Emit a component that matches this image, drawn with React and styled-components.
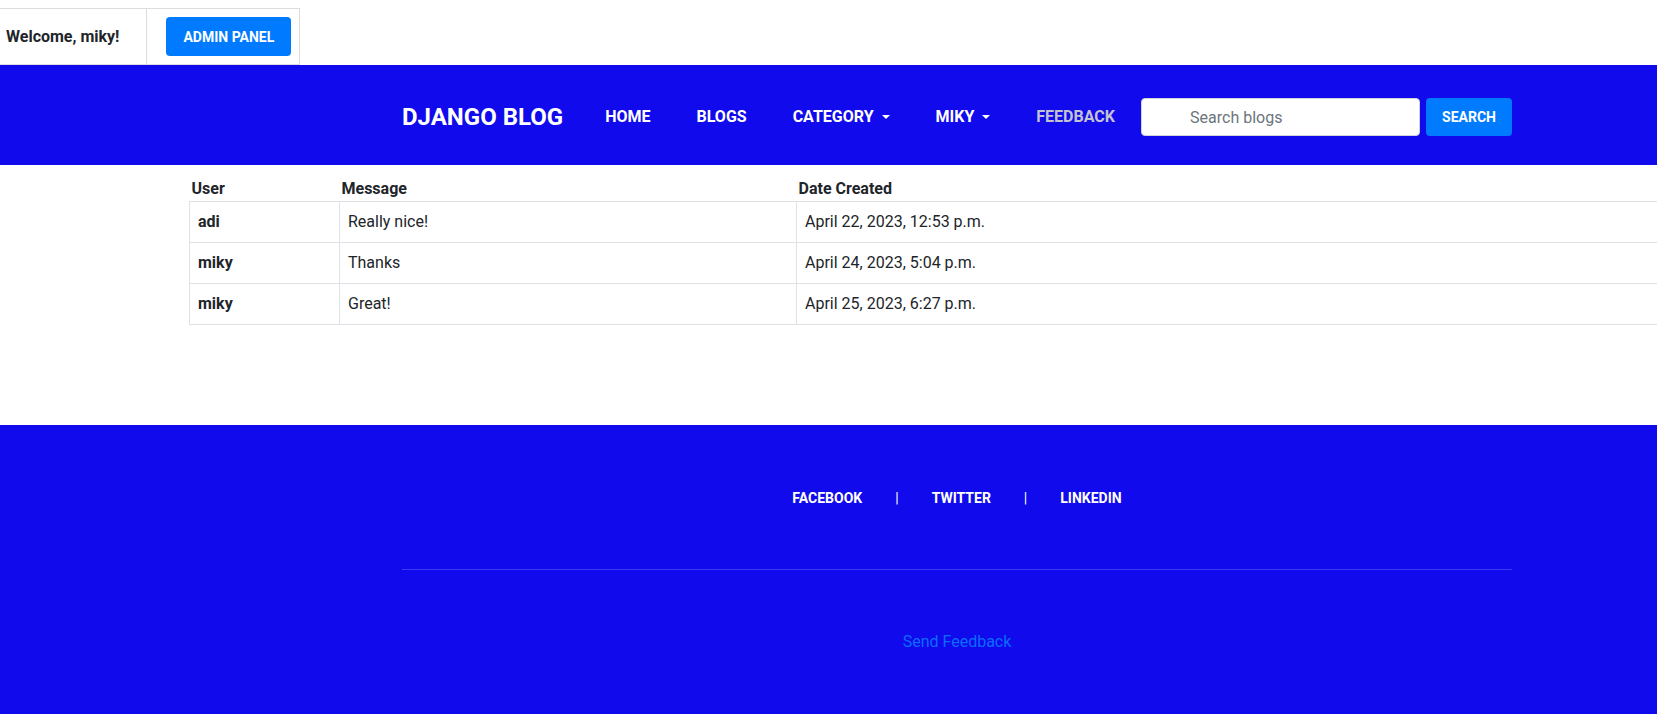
import React from 'react';
import styled, { createGlobalStyle } from 'styled-components';

const GlobalStyle = createGlobalStyle`
  html, body {
    overflow-x: hidden;
  }
  body {
    margin: 8px 0;
    background: #fff;
    font-family: Roboto, "Liberation Sans", Arial, sans-serif;
    font-size: 16px;
    line-height: 24px;
    color: #212529;
  }
  * {
    box-sizing: border-box;
  }
`;

const BLUE = '#100aec';

const Page = styled.div`
  width: 1914px;
`;

const TopTable = styled.table`
  border-collapse: collapse;
  border-top: 1px solid #dddddd;
  border-bottom: 1px solid #dddddd;
  border-right: 1px solid #dddddd;
`;

const TopCell = styled.td`
  padding: ${(p) => (p.$first ? '8px 27px 8px 6px' : '8px 8px 8px 19px')};
  border-right: ${(p) => (p.$first ? '1px solid #dddddd' : 'none')};
  font-weight: 700;
  vertical-align: middle;
`;

const PrimaryButton = styled.button`
  height: ${(p) => (p.$tall ? '39px' : '38px')};
  padding: 0 ${(p) => (p.$tall ? '17px' : '16px')};
  border: none;
  border-radius: 4px;
  background: #007bff;
  color: #fff;
  font-family: inherit;
  font-size: 14px;
  font-weight: 700;
  text-transform: uppercase;
  cursor: pointer;
  display: block;
`;

const Navbar = styled.nav`
  background: ${BLUE};
  height: 100px;
  padding-top: 4px;
  display: flex;
  align-items: center;
`;

const Container = styled.div`
  width: 1110px;
  margin: 0 auto;
  display: flex;
  align-items: center;
`;

const Brand = styled.a`
  color: #fff;
  font-size: 24px;
  font-weight: 700;
  text-transform: uppercase;
  margin-right: 19px;
  white-space: nowrap;
`;

const NavLink = styled.a`
  padding: 0 23px;
  color: ${(p) => (p.$muted ? '#c3c3d0' : '#fff')};
  font-size: 16px;
  font-weight: 700;
  text-transform: uppercase;
  white-space: nowrap;
  display: flex;
  align-items: center;

  ${(p) =>
    p.$dropdown &&
    `
    &::after {
      content: "";
      margin-left: 8px;
      border-top: 4px solid #fff;
      border-left: 4px solid transparent;
      border-right: 4px solid transparent;
    }
  `}
`;

const SearchForm = styled.form`
  margin-left: auto;
  display: flex;
  align-items: center;
  gap: 6px;
`;

const SearchInput = styled.input`
  width: 279px;
  height: 38px;
  padding: 0 12px 0 48px;
  border: 1px solid #ced4da;
  border-radius: 4px;
  font-family: inherit;
  font-size: 16px;
  color: #495057;

  &::placeholder {
    color: #6c757d;
  }
`;

const Main = styled.main`
  padding: 12px 190px 100px 189px;
`;

const FeedbackTable = styled.table`
  width: 100%;
  border-collapse: collapse;
`;

const HeadCell = styled.th`
  text-align: left;
  font-weight: 700;
  padding: 0 2px;
  width: ${(p) => p.$w || 'auto'};
`;

const Cell = styled.td`
  border: 1px solid #dee2e6;
  padding: 8px;
  font-weight: ${(p) => (p.$bold ? 700 : 400)};
`;

const Footer = styled.footer`
  background: ${BLUE};
  height: 289px;
  padding-top: 61px;
`;

const FooterInner = styled.div`
  width: 1110px;
  margin: 0 auto;
  display: flex;
  flex-direction: column;
  align-items: center;
`;

const SocialRow = styled.div`
  display: flex;
  align-items: center;
  line-height: 24px;
`;

const SocialLink = styled.a`
  color: #fff;
  font-size: 14px;
  font-weight: 700;
  text-transform: uppercase;
`;

const Divider = styled.span`
  color: #fff;
  font-size: 14px;
  margin: 0 33px 0 33px;
`;

const Rule = styled.hr`
  width: 100%;
  margin: 59px 0 60px;
  border: none;
  border-top: 1px solid rgba(255, 255, 255, 0.18);
`;

const FeedbackLink = styled.a`
  color: #0b6cff;
  font-size: 16px;
`;

const rows = [
  { user: 'adi', message: 'Really nice!', date: 'April 22, 2023, 12:53 p.m.' },
  { user: 'miky', message: 'Thanks', date: 'April 24, 2023, 5:04 p.m.' },
  { user: 'miky', message: 'Great!', date: 'April 25, 2023, 6:27 p.m.' },
];

const socials = ['Facebook', 'Twitter', 'LinkedIn'];

export default function App() {
  return (
    <Page>
      <GlobalStyle />
      <TopTable>
        <tbody>
          <tr>
            <TopCell $first>Welcome, miky!</TopCell>
            <TopCell>
              <PrimaryButton $tall>Admin Panel</PrimaryButton>
            </TopCell>
          </tr>
        </tbody>
      </TopTable>

      <Navbar>
        <Container>
          <Brand>Django Blog</Brand>
          <NavLink>Home</NavLink>
          <NavLink>Blogs</NavLink>
          <NavLink $dropdown>Category</NavLink>
          <NavLink $dropdown>miky</NavLink>
          <NavLink $muted>Feedback</NavLink>
          <SearchForm onSubmit={(e) => e.preventDefault()}>
            <SearchInput placeholder="Search blogs" />
            <PrimaryButton type="submit">Search</PrimaryButton>
          </SearchForm>
        </Container>
      </Navbar>

      <Main>
        <FeedbackTable>
          <thead>
            <tr>
              <HeadCell $w="150px">User</HeadCell>
              <HeadCell $w="457px">Message</HeadCell>
              <HeadCell>Date Created</HeadCell>
            </tr>
          </thead>
          <tbody>
            {rows.map((r, i) => (
              <tr key={i}>
                <Cell $bold>{r.user}</Cell>
                <Cell>{r.message}</Cell>
                <Cell>{r.date}</Cell>
              </tr>
            ))}
          </tbody>
        </FeedbackTable>
      </Main>

      <Footer>
        <FooterInner>
          <SocialRow>
            {socials.map((s, i) => (
              <React.Fragment key={s}>
                {i > 0 && <Divider>|</Divider>}
                <SocialLink>{s}</SocialLink>
              </React.Fragment>
            ))}
          </SocialRow>
          <Rule />
          <FeedbackLink>Send Feedback</FeedbackLink>
        </FooterInner>
      </Footer>
    </Page>
  );
}
